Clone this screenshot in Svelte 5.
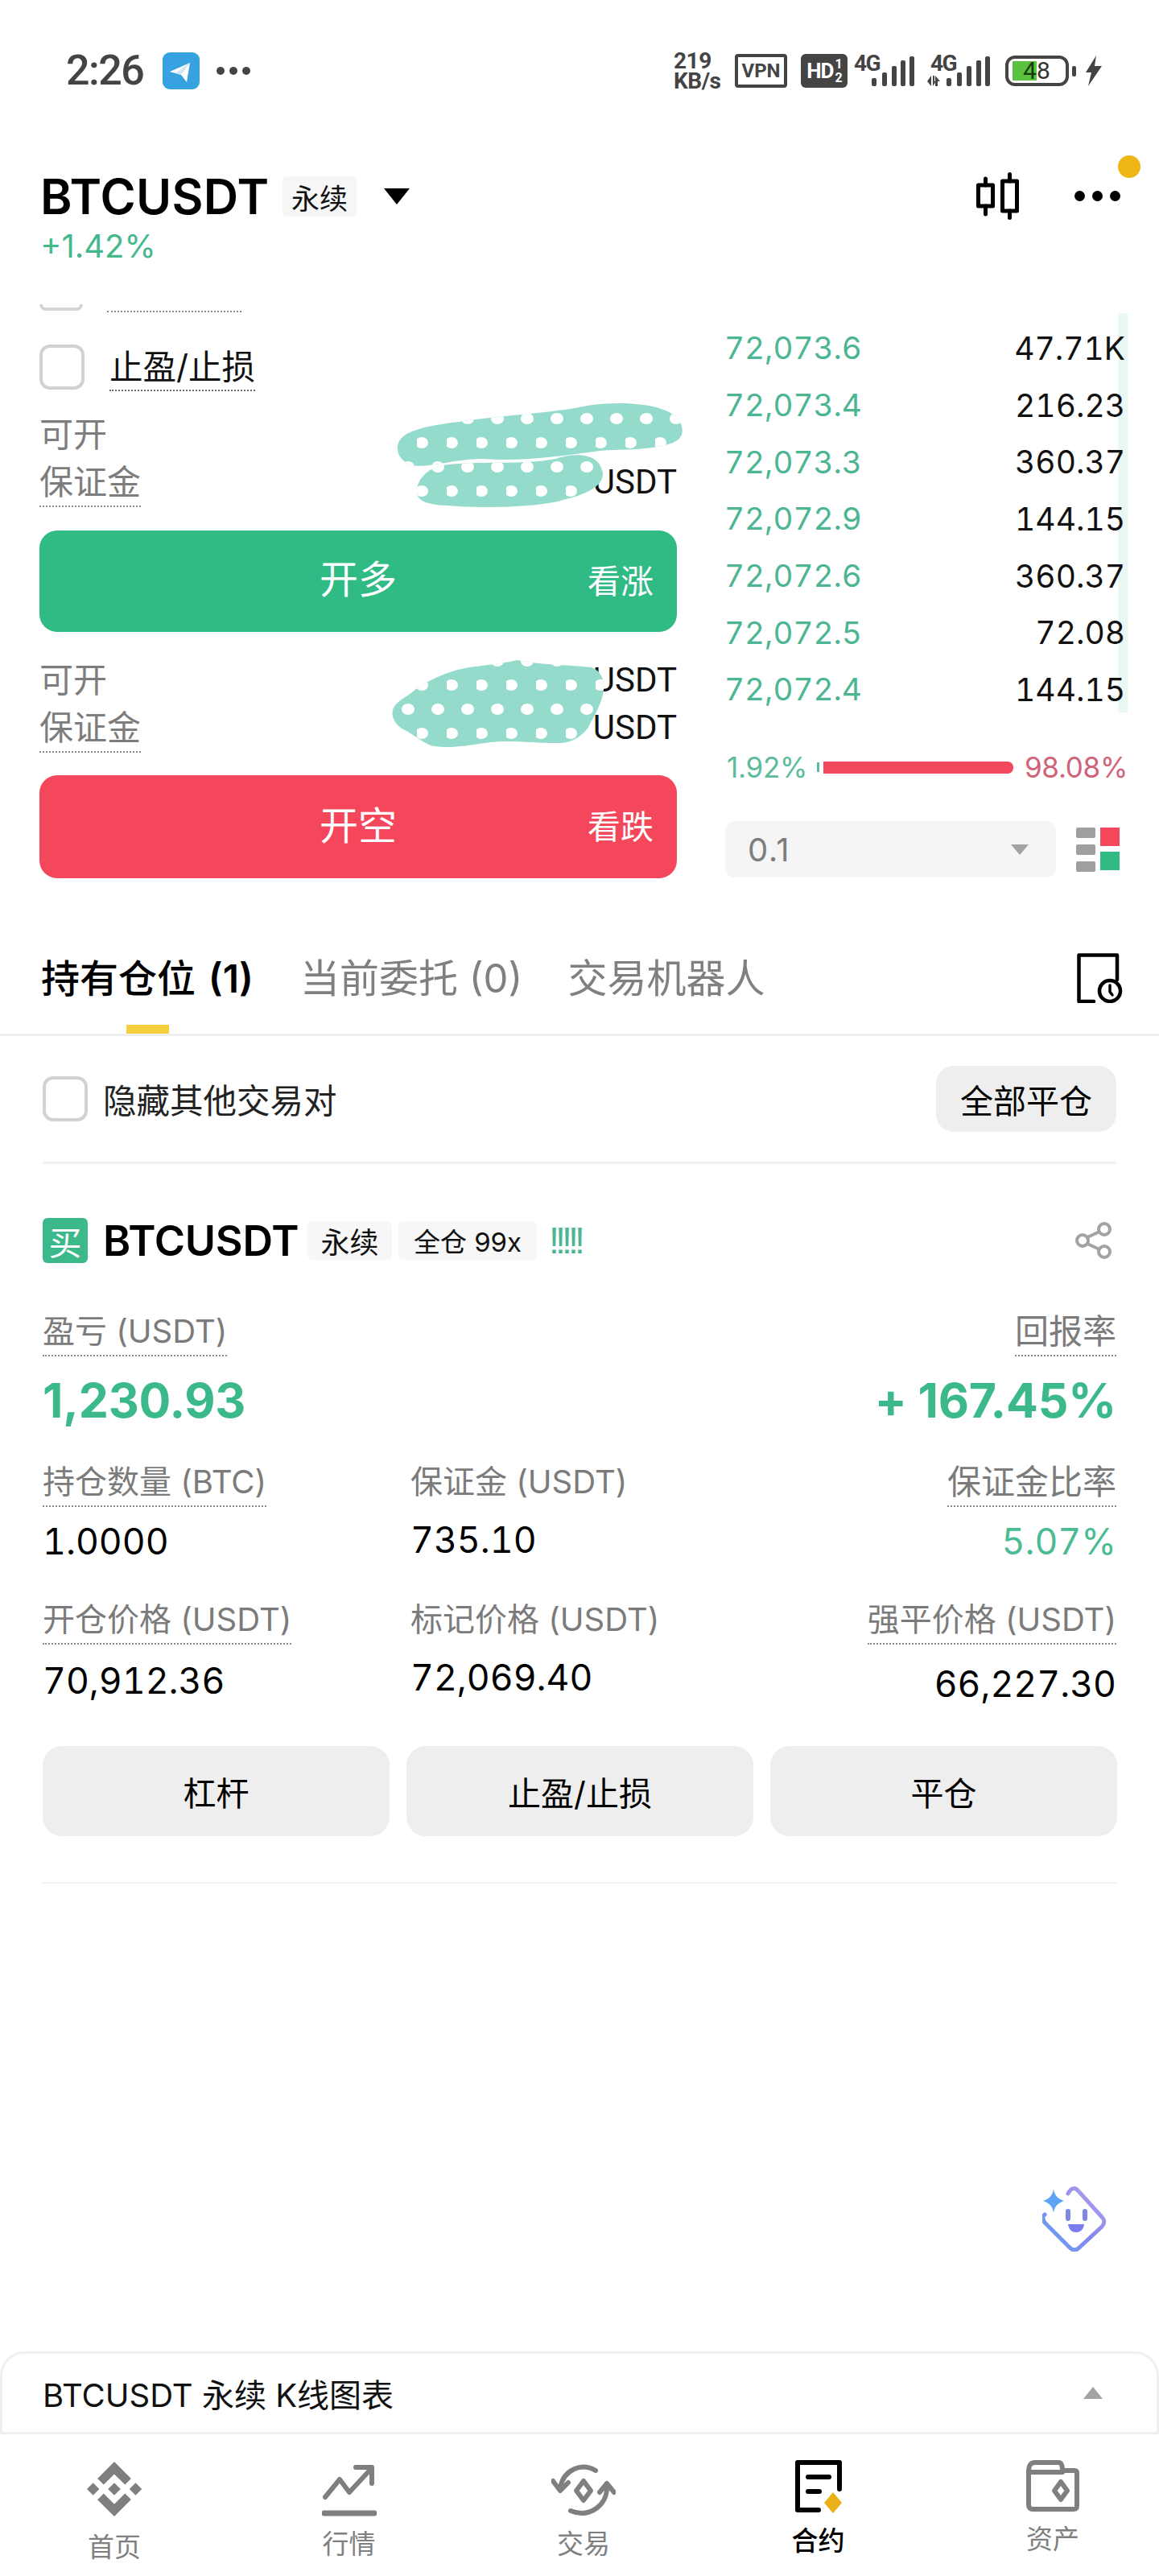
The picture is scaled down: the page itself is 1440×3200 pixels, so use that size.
<script>
  const book = [
    ['72,073.6', '47.71K'],
    ['72,073.4', '216.23'],
    ['72,073.3', '360.37'],
    ['72,072.9', '144.15'],
    ['72,072.6', '360.37'],
    ['72,072.5', '72.08'],
    ['72,072.4', '144.15']
  ];
</script>

<div class="page">
  <header class="status">
    <div class="status-left">
      <span class="time">2:26</span>
      <span class="tg">
        <svg width="46" height="46" viewBox="0 0 46 46"><path d="M9 24 L34 13 L30 37 L23 28 Z" fill="#fff"/><path d="M16 26 L34 13 L23 28 Z" fill="#cfe6f5"/></svg>
      </span>
      <span class="mini-dots"><i></i><i></i><i></i></span>
    </div>
    <div class="status-right">
      <div class="speed"><span>219</span><span>KB/s</span></div>
      <div class="vpn">VPN</div>
      <div class="hd">HD<span class="frac"><b>1</b><b>2</b></span></div>
      <svg class="sig1" width="75" height="50" viewBox="0 -8 75 50">
        <text x="0" y="21" class="sig-t">4G</text>
        <g fill="#444"><rect x="22" y="30" width="6" height="10" rx="2"/><rect x="35" y="23" width="6" height="17" rx="2"/><rect x="47" y="15" width="6" height="25" rx="2"/><rect x="58" y="8" width="6" height="32" rx="2"/><rect x="69" y="3" width="6" height="37" rx="2"/></g>
      </svg>
      <svg class="sig2" width="78" height="50" viewBox="0 -8 78 50">
        <text x="4" y="21" class="sig-t">4G</text>
        <g fill="#444"><path d="M0 34 L5 27 V40 Z M7 40 V27 H9 V34 H11 L7 40 Z"/><path d="M10 27 L16 34 H13 V40 H10 Z"/><rect x="24" y="30" width="6" height="10" rx="2"/><rect x="37" y="23" width="6" height="17" rx="2"/><rect x="49" y="15" width="6" height="25" rx="2"/><rect x="61" y="8" width="6" height="32" rx="2"/><rect x="72" y="3" width="6" height="37" rx="2"/></g>
      </svg>
      <div class="battery"><span class="fill"></span><span class="num"><em>4</em>8</span></div>
      <span class="tip"></span>
      <svg class="bolt" width="23" height="38" viewBox="0 0 23 38"><path d="M16 0 L3 21 H10 L6 38 L23 13 H14 Z" fill="#444"/></svg>
    </div>
  </header>

  <section class="title">
    <div>
      <div class="name-row">
        <h1>BTCUSDT</h1>
        <span class="tag big">永续</span>
        <span class="caret"></span>
      </div>
      <div class="change">+1.42%</div>
    </div>
    <div class="title-icons">
      <svg width="53" height="59" viewBox="0 0 53 59" fill="none" stroke="#000" stroke-width="5" stroke-linecap="round" stroke-linejoin="round">
        <rect x="2.5" y="16" width="18" height="26"/><path d="M11.5 8 V16 M11.5 42 V52"/>
        <rect x="32.5" y="11" width="18" height="37"/><path d="M41.5 2.5 V11 M41.5 48 V56.5"/>
      </svg>
      <span class="more"><i></i><i></i><i></i></span>
      <span class="notice"></span>
    </div>
  </section>

  <section class="trade">
    <div class="left">
      <div class="stub"><span class="stub-box"></span><span class="stub-line"></span></div>
      <div class="tp">
        <span class="check"></span>
        <span class="tp-label">止盈/止损</span>
      </div>
      <div class="info first">
        <div class="info-row"><span class="muted">可开</span><span class="unit"></span></div>
        <div class="info-row"><span class="muted dotted">保证金</span><span class="unit">USDT</span></div>
        <svg class="blob blob-a" width="370" height="140" viewBox="489 500 370 140">
          <defs><pattern id="pa" patternUnits="userSpaceOnUse" x="0" y="505" width="37" height="60"><ellipse cx="26" cy="15" rx="8" ry="7" fill="#fff"/><ellipse cx="6" cy="45" rx="8" ry="7" fill="#fff"/></pattern></defs>
          <path d="M494 556 C494 538 520 530 570 524 C620 516 680 514 724 505 C760 498 830 498 845 524 C852 540 845 548 830 552 C800 560 770 558 745 560 C700 566 650 574 600 570 C560 570 520 586 505 575 C498 570 494 565 494 556 Z" fill="#95dbcb"/>
          <path d="M494 556 C494 538 520 530 570 524 C620 516 680 514 724 505 C760 498 830 498 845 524 C852 540 845 548 830 552 C800 560 770 558 745 560 C700 566 650 574 600 570 C560 570 520 586 505 575 C498 570 494 565 494 556 Z" fill="url(#pa)"/>
          <path d="M518 611 C518 596 530 582 550 578 C590 572 650 578 690 570 C715 562 745 562 749 588 C750 605 725 615 700 621 C670 630 600 632 555 628 C530 627 518 622 518 611 Z" fill="#95dbcb"/>
          <path d="M518 611 C518 596 530 582 550 578 C590 572 650 578 690 570 C715 562 745 562 749 588 C750 605 725 615 700 621 C670 630 600 632 555 628 C530 627 518 622 518 611 Z" fill="url(#pa)"/>
        </svg>
      </div>
      <button class="action long"><span>开多</span><small>看涨</small></button>
      <div class="info second">
        <div class="info-row"><span class="muted">可开</span><span class="unit">USDT</span></div>
        <div class="info-row"><span class="muted dotted">保证金</span><span class="unit">USDT</span></div>
        <svg class="blob blob-b" width="290" height="130" viewBox="480 810 290 130">
          <defs><pattern id="pb" patternUnits="userSpaceOnUse" x="0" y="806" width="37" height="60"><ellipse cx="26" cy="15" rx="8" ry="7" fill="#fff"/><ellipse cx="6" cy="45" rx="8" ry="7" fill="#fff"/></pattern></defs>
          <path d="M513 859 C530 845 550 838 565 833 C590 826 620 826 642 820 C670 826 710 826 735 829 C750 835 752 850 749 863 C745 880 735 895 730 905 C720 918 705 923 697 923 C670 924 630 918 603 923 C580 926 560 930 540 927 C525 924 515 912 499 905 C490 898 486 890 488 882 C490 872 505 866 513 859 Z" fill="#95dbcb"/>
          <path d="M513 859 C530 845 550 838 565 833 C590 826 620 826 642 820 C670 826 710 826 735 829 C750 835 752 850 749 863 C745 880 735 895 730 905 C720 918 705 923 697 923 C670 924 630 918 603 923 C580 926 560 930 540 927 C525 924 515 912 499 905 C490 898 486 890 488 882 C490 872 505 866 513 859 Z" fill="url(#pb)"/>
        </svg>
      </div>
      <button class="action short"><span>开空</span><small>看跌</small></button>
    </div>

    <div class="right">
      <div class="book">
        <span class="depth"></span>
        {#each book as [price, size]}
          <div class="book-row"><span class="price">{price}</span><span class="size">{size}</span></div>
        {/each}
      </div>
      <div class="ratio">
        <span class="pct-g">1.92%</span>
        <span class="bar"><i class="bar-g"></i><i class="bar-r"></i></span>
        <span class="pct-r">98.08%</span>
      </div>
      <div class="controls">
        <div class="select"><span>0.1</span><i class="tri-down"></i></div>
        <div class="layout-ic">
          <div class="grey"><i></i><i></i><i></i></div>
          <div class="sq"><i class="r"></i><i class="g"></i></div>
        </div>
      </div>
    </div>
  </section>

  <nav class="tabs">
    <span class="tab on">持有仓位 <b>(1)</b></span>
    <span class="tab two">当前委托 (0)</span>
    <span class="tab">交易机器人</span>
    <svg class="hist" width="57" height="62" viewBox="0 0 57 62" fill="none" stroke="#000" stroke-width="4.5" stroke-linecap="round" stroke-linejoin="round">
      <path d="M21 60 H2.5 V2.5 H50 V33"/>
      <circle cx="41" cy="47" r="13"/>
      <path d="M41 40 V48 L44 52" stroke-width="3.5"/>
    </svg>
    <span class="indicator"></span>
  </nav>

  <div class="filter">
    <div class="filter-left"><span class="check"></span><span class="filter-label">隐藏其他交易对</span></div>
    <button class="pill">全部平仓</button>
  </div>

  <section class="position">
    <div class="pos-head">
      <span class="buy">买</span>
      <span class="pos-name">BTCUSDT</span>
      <span class="tag t1">永续</span>
      <span class="tag t2">全仓 99x</span>
      <span class="bangs">!!!!!</span>
      <svg class="share" width="46" height="46" viewBox="0 0 46 46" fill="none" stroke="#a3a3a3" stroke-width="4">
        <circle cx="36" cy="9" r="7"/><circle cx="9" cy="23" r="7"/><circle cx="36" cy="37" r="7"/>
        <path d="M15 19 L30 12 M15 27 L30 34"/>
      </svg>
    </div>

    <div class="stat-row r1">
      <div><span class="lbl dotted">盈亏 (USDT)</span><div class="pnl">1,230.93</div></div>
      <div class="end"><span class="lbl cjk dotted">回报率</span><div class="pnl">+ 167.45%</div></div>
    </div>
    <div class="stats r2">
      <div><span class="lbl dotted">持仓数量 (BTC)</span><div class="val">1.0000</div></div>
      <div><span class="lbl">保证金 (USDT)</span><div class="val mid">735.10</div></div>
      <div class="end"><span class="lbl cjk dotted">保证金比率</span><div class="val green">5.07%</div></div>
    </div>
    <div class="stats r3">
      <div><span class="lbl dotted">开仓价格 (USDT)</span><div class="val">70,912.36</div></div>
      <div><span class="lbl">标记价格 (USDT)</span><div class="val mid">72,069.40</div></div>
      <div class="end"><span class="lbl dotted">强平价格 (USDT)</span><div class="val low">66,227.30</div></div>
    </div>
    <div class="pos-btns">
      <button>杠杆</button><button>止盈/止损</button><button>平仓</button>
    </div>
    <div class="pos-end"></div>
  </section>

  <div class="spacer"></div>

  <svg class="ai" width="80" height="81" viewBox="0 0 80 81" fill="none">
    <defs>
      <linearGradient id="aig" x1="0" y1="1" x2="1" y2="0"><stop offset="0" stop-color="#62a6f6"/><stop offset="0.5" stop-color="#8487ec"/><stop offset="1" stop-color="#b9a6ee"/></linearGradient>
    </defs>
    <path d="M32 9 C36 1 41 1 45 6 L74 38 C78 42 78 45 74 50 L46 76 C42 80 38 80 34 76 L4 46 C0 42 0 37 3 35" stroke="url(#aig)" stroke-width="5" stroke-linecap="round"/>
    <path d="M14 3 C15 10 18 15 27 18 C18 21 15 26 14 33 C13 26 10 21 1 18 C10 15 13 10 14 3 Z" fill="#5fa3f7"/>
    <rect x="29" y="28" width="6" height="15" rx="3" fill="#7f88e6"/>
    <rect x="50" y="28" width="6" height="15" rx="3" fill="#7f88e6"/>
    <path d="M32 47 H52 C51 55 46 57 42 57 C37 57 33 54 32 47 Z" fill="#7a7cf0"/>
  </svg>

  <div class="chart-bar">
    <span>BTCUSDT 永续 K线图表</span>
    <i class="tri-up"></i>
  </div>

  <footer class="nav">
    <div class="nav-item home">
      <svg width="68" height="72" viewBox="0 0 126.61 134" fill="#7f7f7f"><path d="M38.73 53.2l24.59-24.58 24.6 24.6 14.3-14.31L63.32 0 24.43 38.9l14.3 14.3zM0 63.31l14.3-14.3 14.3 14.3-14.3 14.3L0 63.31zm38.73 10.1l24.59 24.6 24.6-24.6 14.31 14.29-38.9 38.91-38.91-38.88 14.31-14.32zm59.58-10.1l14.3-14.3 14.3 14.3-14.3 14.3-14.3-14.3zM77.83 63.3L63.32 48.78 52.59 59.51l-1.24 1.23-2.54 2.54 14.51 14.52 14.51-14.52z"/></svg>
      <span>首页</span>
    </div>
    <div class="nav-item mkt">
      <svg width="68" height="72" viewBox="0 0 68 72" fill="none" stroke="#7f7f7f" stroke-linecap="round" stroke-linejoin="round">
        <path d="M4 44 L22 22 L34 38 L60 10" stroke-width="6"/>
        <path d="M42 7 H62 V27" stroke-width="6"/>
        <path d="M3 64 H65" stroke-width="7"/>
      </svg>
      <span>行情</span>
    </div>
    <div class="nav-item swap">
      <svg width="80" height="72" viewBox="0 0 80 72" fill="none" stroke="#7f7f7f" stroke-width="6" stroke-linecap="round" stroke-linejoin="round">
        <path d="M55 12 C38 2 15 10 11 34"/><path d="M2 25 L11 37 L21 27"/>
        <path d="M69 32 C70 54 48 72 24 62"/><path d="M60 39 L69 28 L78 39"/>
        <path d="M40 25 L49 37 L40 49 L31 37 Z"/>
      </svg>
      <span>交易</span>
    </div>
    <div class="nav-item act">
      <svg width="60" height="68" viewBox="0 0 60 68" fill="none" stroke="#000" stroke-width="6" stroke-linecap="round" stroke-linejoin="round">
        <path d="M30 63 H4 V4 H56 V37"/>
        <path d="M17 22 H43 M17 40 H31"/>
        <path d="M48 41 L59 54 L48 67 L37 54 Z" fill="#e9b117" stroke="none"/>
      </svg>
      <span>合约</span>
    </div>
    <div class="nav-item asset">
      <svg width="66" height="66" viewBox="0 0 66 66" fill="none" stroke="#7f7f7f" stroke-width="6" stroke-linecap="round" stroke-linejoin="round">
        <path d="M3 16 C3 8 5 4 11 4 H40 C43 4 45 6 45 14 H60 C62 14 63 15 63 17 V58 C63 61 62 62 59 62 H8 C5 62 3 60 3 57 Z"/>
        <path d="M3 16 H45"/>
        <path d="M43 28 L51 39 L43 50 L35 39 Z"/>
      </svg>
      <span>资产</span>
    </div>
  </footer>
</div>

<style>
  :global(body) { margin: 0; background: #fff; }
  .page {
    position: relative; width: 1440px; height: 3200px; overflow: hidden; background: #fff;
    display: flex; flex-direction: column; color: #000;
    font-family: Inter, "Noto Sans CJK SC", sans-serif;
  }
  button { font-family: inherit; border: 0; padding: 0; color: inherit; }
  i, em { font-style: normal; display: block; }

  .status { height: 176px; flex: none; display: flex; align-items: center; justify-content: space-between; padding: 0 71px 0 82px; color: #444; font-family: Roboto, sans-serif; }
  .status-left { display: flex; align-items: center; }
  .time { font-size: 52px; font-weight: 500; width: 120px; line-height: 50px; letter-spacing: -1.5px; }
  .tg { width: 46px; height: 46px; border-radius: 9px; background: #36a3e0; display: block; }
  .tg svg { display: block; }
  .mini-dots { display: flex; gap: 6px; margin-left: 21px; }
  .mini-dots i { width: 10px; height: 10px; border-radius: 50%; background: #444; }
  .status-right { display: flex; align-items: center; }
  .speed { width: 61px; display: flex; flex-direction: column; font-size: 28px; line-height: 25px; font-weight: 700; letter-spacing: -.5px; white-space: nowrap; }
  .vpn { width: 65px; height: 42px; box-sizing: border-box; border: 4px solid #444; border-radius: 4px; margin-left: 15px; font-size: 24px; font-weight: 700; text-align: center; line-height: 34px; }
  .hd { width: 58px; height: 42px; border-radius: 6px; margin-left: 17px; background: #444; color: #fff; display: flex; align-items: center; justify-content: center; font-size: 26px; font-weight: 700; letter-spacing: -1px; }
  .frac { display: flex; flex-direction: column; font-size: 16px; line-height: 17px; margin-left: 2px; }
  .frac b { font-weight: 700; }
  .sig1 { margin: -8px 0 0 8px; }
  .sig2 { margin: -8px 0 0 16px; }
  .sig-t { font: 700 28px Roboto, sans-serif; fill: #444; letter-spacing: -1.5px; }
  .battery { position: relative; width: 79px; height: 38px; box-sizing: border-box; border: 4px solid #444; border-radius: 12px; margin-left: 19px; }
  .fill { position: absolute; left: 5px; top: 3px; width: 30px; height: 24px; background: #5cc13f; }
  .num { position: absolute; left: 18px; top: -2px; display: flex; font-size: 30px; line-height: 34px; color: #333; font-weight: 400; }
  .num em { color: #153d10; }
  .tip { width: 5px; height: 13px; background: #444; border-radius: 2px; margin-left: 4px; }
  .bolt { margin-left: 9px; }

  .title { height: 202px; flex: none; box-sizing: border-box; padding: 38px 48px 0 50px; display: flex; justify-content: space-between; }
  .name-row { display: flex; align-items: center; height: 60px; }
  h1 { margin: 0; font-size: 60px; line-height: 60px; font-weight: 600; letter-spacing: .3px; width: 301px; }
  .tag { background: #f6f6f6; border-radius: 6px; display: flex; align-items: center; justify-content: center; color: #111; }
  .tag.big { width: 92px; height: 50px; font-size: 35px; }
  .caret { width: 0; height: 0; border-left: 16px solid transparent; border-right: 16px solid transparent; border-top: 20px solid #000; margin-left: 34px; }
  .change { margin-top: 7px; font-size: 40px; line-height: 50px; color: #45b78d; }
  .title-icons { position: relative; display: flex; align-items: center; height: 60px; margin-top: -1px; }
  .more { display: flex; gap: 9px; margin-left: 69px; }
  .more i { width: 13px; height: 13px; border-radius: 50%; background: #000; }
  .notice { position: absolute; right: -25px; top: -20px; width: 28px; height: 28px; border-radius: 50%; background: #eeb717; }

  .trade { height: 732px; flex: none; display: flex; padding-left: 49px; box-sizing: border-box; }
  .left { width: 792px; }
  .stub { height: 10px; display: flex; }
  .stub-box { width: 54px; height: 8px; background: #fff; border: 4px solid #d4d4d4; border-top: 0; border-radius: 0 0 12px 12px; box-sizing: border-box; }
  .stub-line { width: 167px; height: 8px; margin-left: 30px; border-bottom: 2px dotted #888; }
  .tp { margin-top: 40px; display: flex; height: 58px; }
  .check { display: block; flex: none; width: 56px; height: 56px; box-sizing: border-box; border: 4px solid #d2d2d2; border-radius: 13px; background: #fff; }
  .tp-label { margin-left: 31px; font-size: 41.5px; line-height: 56px; height: 58px; color: #111; border-bottom: 2px dotted #666; box-sizing: border-box; }
  .info { position: relative; height: 120px; }
  .info.first { margin-top: 24px; }
  .info.second { margin-top: 30px; }
  .info-row { display: flex; justify-content: space-between; height: 59px; }
  .muted { font-size: 42px; line-height: 59px; color: #7d7d7d; height: 59px; }
  .dotted { border-bottom: 2px dotted #8a8a8a; }
  .unit { font: 400 42px/59px Roboto, sans-serif; color: #111; }
  .blob { position: absolute; pointer-events: none; }
  .blob-a { left: 440px; top: -10px; }
  .blob-b { left: 431px; top: -5px; }
  .action { position: relative; display: block; width: 792px; height: 126px; border-radius: 22px; color: #fff; font-size: 48px; text-align: center; }
  .action > span { display: block; line-height: 122px; height: 126px; }
  .action small { position: absolute; right: 29px; top: 0; font-size: 41px; line-height: 126px; }
  .long { margin-top: 29px; background: #30bb85; }
  .short { margin-top: 28px; height: 128px; background: #f5475c; }
  .short > span { height: 128px; line-height: 126px; }
  .short small { line-height: 128px; }

  .right { width: 500px; margin-left: 60px; box-sizing: border-box; }
  .book { position: relative; margin-top: 19px; height: 495px; padding-right: 3px; }
  .depth { position: absolute; right: 0; top: -8px; width: 12px; height: 496px; background: #eaf7f2; }
  .book-row { position: relative; display: flex; justify-content: space-between; height: 70.7px; align-items: center; font-variant-numeric: tabular-nums; }
  .price { color: #4cb593; font-size: 38.6px; margin-left: -1px; }
  .size { color: #111; font-size: 39px; }
  .ratio { display: flex; align-items: center; height: 46px; margin-top: 38px; font-size: 35px; letter-spacing: -.3px; }
  .pct-g { width: 123px; margin-left: 2px; color: #5bbb9c; }
  .pct-r { margin-left: 14px; color: #d0637a; }
  .bar { display: flex; align-items: center; width: 244px; }
  .bar-g { width: 3px; height: 12px; background: #5bbb9c; margin-right: 5px; }
  .bar-r { width: 236px; height: 15px; background: #f1485c; border-radius: 0 7px 7px 0; }
  .controls { display: flex; margin-top: 44px; align-items: flex-start; }
  .select { width: 411px; height: 70px; border-radius: 12px; background: #f5f5f5; display: flex; align-items: center; justify-content: space-between; padding: 0 34px 0 28px; box-sizing: border-box; color: #7d7d7d; font-size: 40px; letter-spacing: 1.5px; }
  .tri-down { width: 0; height: 0; border-left: 11px solid transparent; border-right: 11px solid transparent; border-top: 13px solid #a3a3a3; }
  .layout-ic { display: flex; gap: 6px; margin: 8px 0 0 25px; }
  .grey { display: flex; flex-direction: column; gap: 8px; }
  .grey i { width: 24px; height: 13px; border-radius: 2px; background: #9f9f9f; }
  .sq { display: flex; flex-direction: column; gap: 7px; }
  .sq i { width: 24px; height: 23px; }
  .sq .r { background: #f5475c; }
  .sq .g { background: #30bb85; }

  .tabs { position: relative; height: 177px; flex: none; box-sizing: border-box; padding: 76px 0 0 51px; display: flex; border-bottom: 3px solid #eee; }
  .tab { font-size: 49px; line-height: 60px; color: #808080; white-space: nowrap; }
  .tab.on { color: #000; font-weight: 500; font-size: 48px; margin-right: 58px; }
  .tab.two { margin-right: 56px; }
  .tab b { font-weight: 600; font-size: 48px; margin-left: 3px; }
  .hist { position: absolute; right: 45px; top: 74px; }
  .indicator { position: absolute; left: 157px; bottom: 0; width: 53px; height: 11px; background: #f5cf3c; }

  .filter { height: 156px; flex: none; margin: 0 53px; display: flex; justify-content: space-between; align-items: center; border-bottom: 3px solid #f0f0f0; }
  .filter-left { display: flex; align-items: center; }
  .filter-label { margin-left: 19px; font-size: 41.5px; color: #222; }
  .pill { width: 224px; height: 82px; border-radius: 22px; background: #eee; font-size: 41px; }

  .position { flex: none; padding: 67px 53px 0; }
  .pos-head { display: flex; align-items: center; height: 56px; position: relative; }
  .buy { width: 56px; height: 56px; border-radius: 6px; background: #3cb98a; color: #fff; font-size: 41px; display: flex; align-items: center; justify-content: center; }
  .pos-name { margin-left: 19px; width: 254px; font-size: 52px; font-weight: 600; letter-spacing: -.2px; }
  .t1 { width: 105px; height: 48px; font-size: 36px; background: #f7f7f7; }
  .t2 { width: 172px; height: 48px; font-size: 33px; margin-left: 8px; background: #f7f7f7; }
  .bangs { margin-left: 15px; color: #4cb593; font-size: 46px; letter-spacing: -4.8px; font-family: "Liberation Sans", sans-serif; }
  .share { position: absolute; right: 5px; top: 5px; }

  .stat-row { display: flex; justify-content: space-between; margin-top: 56px; }
  .stats { display: grid; grid-template-columns: 457px 1fr auto; }
  .r2 { margin-top: 44px; }
  .r3 { margin-top: 43px; }
  .end { text-align: right; }
  .lbl { display: inline-block; font-size: 40px; line-height: 58px; height: 58px; color: #7b7b7b; white-space: nowrap; }
  .lbl.cjk { font-size: 42px; }
  .pnl { margin-top: 27px; font-size: 59px; line-height: 56px; font-weight: 700; color: #3cb98a; letter-spacing: -.2px; }
  .val { margin-top: 18px; font-size: 44.6px; line-height: 50px; color: #000; font-variant-numeric: tabular-nums; }
  .val.mid { margin-top: 18px; }
  .r3 .val { margin-top: 20px; }
  .r3 .val.mid { margin-top: 18px; }
  .r3 .val.low { margin-top: 24px; }
  .val.green { color: #4bbb94; }
  .pos-btns { display: grid; grid-template-columns: repeat(3, 431px); gap: 21px; margin-top: 52px; }
  .pos-btns button { height: 112px; border-radius: 24px; background: #eee; font-size: 41px; color: #000; }
  .pos-end { margin-top: 57px; height: 2px; background: #f4f4f4; }

  .spacer { flex: 1; }
  .ai { position: absolute; left: 1295px; top: 2716px; }

  .chart-bar { height: 103px; flex: none; box-sizing: border-box; display: flex; justify-content: space-between; align-items: center; padding: 0 67px 0 50px; border: 3px solid #f0f0f0; border-radius: 30px 30px 0 0; font-size: 40px; color: #111; }
  .tri-up { width: 0; height: 0; border-left: 12px solid transparent; border-right: 12px solid transparent; border-bottom: 15px solid #a3a3a3; }

  .nav { height: 176px; flex: none; box-sizing: border-box; display: flex; justify-content: space-between; padding: 28px 92px 0 102px; }
  .nav-item { width: 80px; display: flex; flex-direction: column; align-items: center; font-size: 33px; color: #808080; position: relative; }
  .nav-item svg { height: 72px; display: block; }
  .nav-item span { display: block; line-height: 40px; margin-top: 16px; white-space: nowrap; }
  .home svg { margin-top: 6px; }
  .home span { margin-top: 14px; }
  .mkt svg { margin-top: 6px; }
  .mkt span { margin-top: 10px; }
  .swap svg { margin-top: 5px; }
  .swap span { margin-top: 11px; }
  .act { color: #000; font-weight: 500; }
  .act svg { margin-top: 1px; }
  .act span { margin-top: 11px; }
  .asset span { margin-top: 10px; }
</style>
